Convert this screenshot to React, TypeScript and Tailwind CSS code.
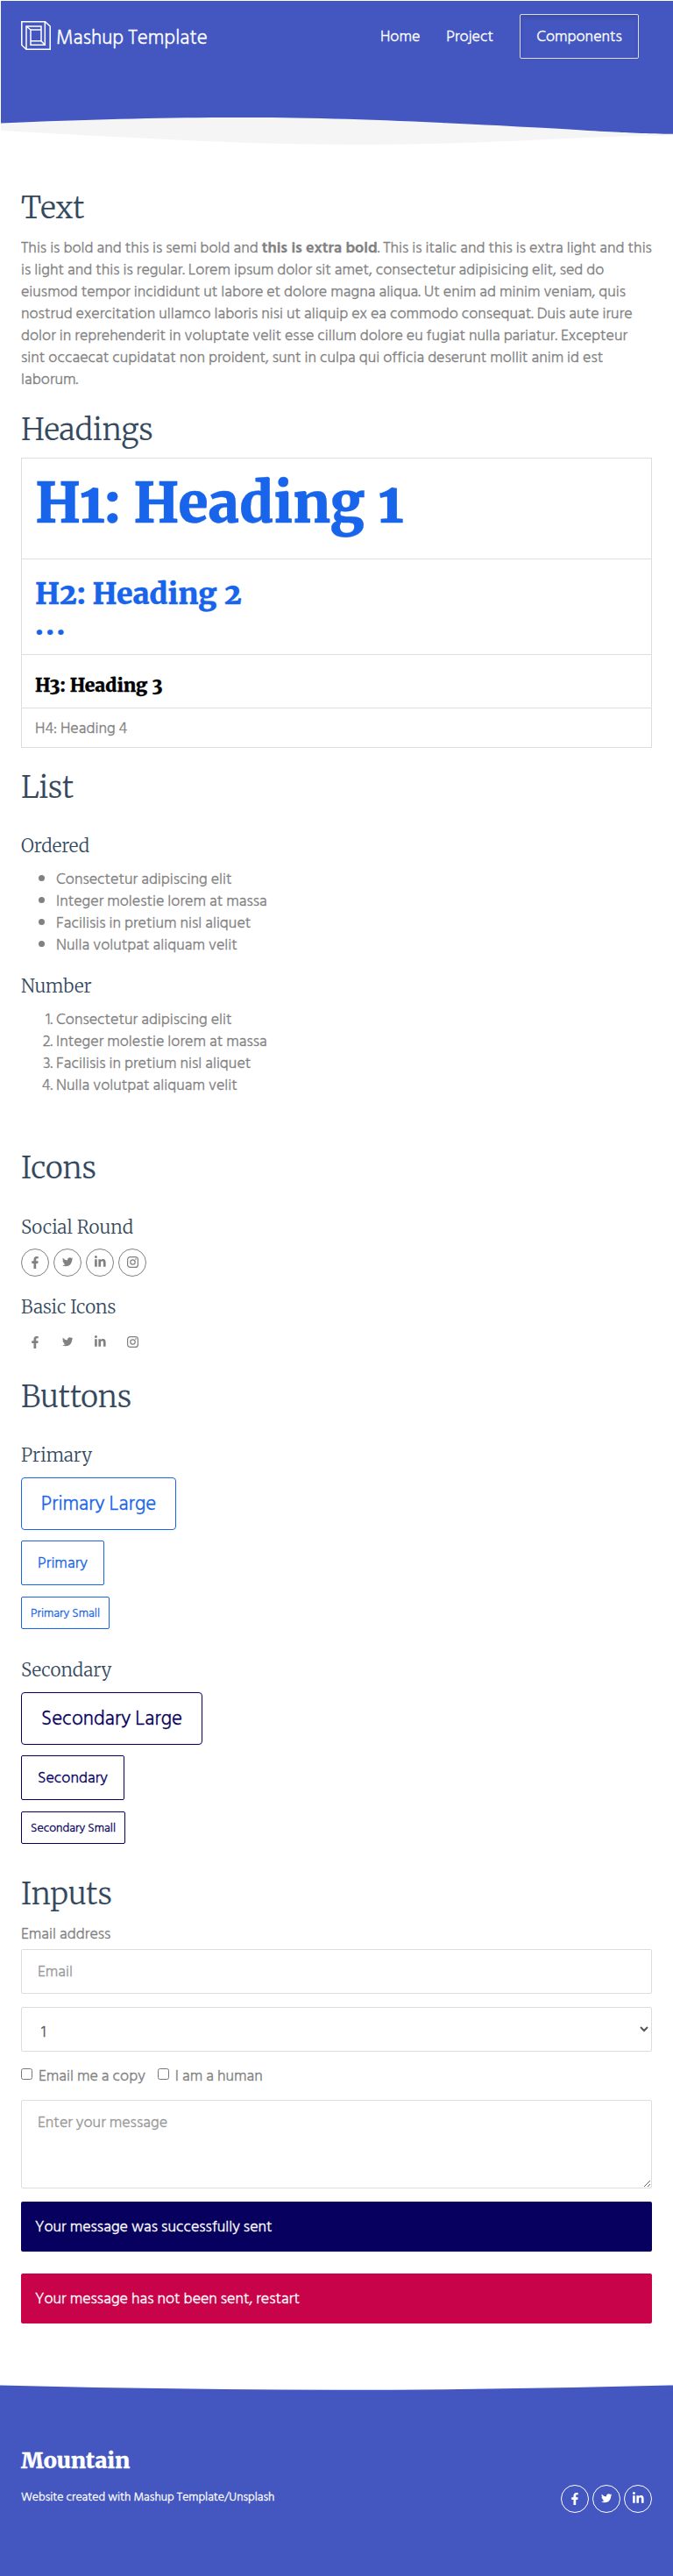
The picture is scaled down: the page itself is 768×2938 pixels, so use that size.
import type { ReactNode } from "react";
import { FaFacebookF, FaLinkedinIn, FaTwitter } from "react-icons/fa";

const items = [
  "Consectetur adipiscing elit",
  "Integer molestie lorem at massa",
  "Facilisis in pretium nisl aliquet",
  "Nulla volutpat aliquam velit",
];

function Title({ children, className }: { children: ReactNode; className: string }) {
  return (
    <h2 className={`-mb-0.5 font-['Merriweather','DejaVu_Serif_Condensed',serif] text-[34px] leading-[42px] font-light text-[#34495e] [-webkit-text-stroke:0.1px] ${className}`}>
      {children}
    </h2>
  );
}

function Subtitle({ children, className }: { children: ReactNode; className: string }) {
  return (
    <h3 className={`font-['Merriweather','DejaVu_Serif_Condensed',serif] text-[20.7px] leading-7 font-light text-[#34495e] [-webkit-text-stroke:0] ${className}`}>
      {children}
    </h3>
  );
}

function Instagram() {
  return (
    <svg viewBox="0 0 13 13" className="size-[13px]" fill="none" stroke="currentColor">
      <rect x="0.6" y="0.6" width="11.8" height="11.8" rx="3" strokeWidth="1.2" />
      <circle cx="6.5" cy="6.5" r="2.7" strokeWidth="1.2" />
      <circle cx="9.9" cy="3.1" r="0.8" fill="currentColor" stroke="none" />
    </svg>
  );
}

function Social({ round, instagram }: { round?: boolean; instagram?: boolean }) {
  const cell = round
    ? "flex size-8 items-center justify-center rounded-full border border-current pb-px"
    : "flex size-8 items-center justify-center pb-px";
  return (
    <>
      <a className={cell}><FaFacebookF className="size-[14px]" /></a>
      <a className={cell}><FaTwitter className="size-[12.5px]" /></a>
      <a className={cell}><FaLinkedinIn className="size-[14.5px]" /></a>
      {instagram && <a className={cell}><Instagram /></a>}
    </>
  );
}

function Logo() {
  return (
    <svg viewBox="0 0 34 33" className="h-[33px] w-[34px]" fill="none" stroke="#fff" strokeWidth="1.5">
      <path d="M.8.8H27.5L33.2 6V32.2H6L.8 27.5Z" />
      <path d="M27.3.8V27.2H11V10H23" />
      <path d="M6 32.2V6H23V22.8H11" />
      <path d="M6 6L11 10M23 22.8L27.3 27.2" />
    </svg>
  );
}

export default function App() {
  return (
    <div className="h-[2938px] w-[768px] overflow-hidden bg-white pt-px font-['Hind_Siliguri','Hind','Open_Sans',sans-serif] text-[18px] leading-[25px] font-light text-[#818181] [-webkit-text-stroke:0.3px]">
      <header className="ml-px">
        <div className="flex h-[132px] items-start justify-between bg-[#4457c0] pt-[15px] pr-[39px] pl-[23px] text-white">
          <div className="flex pt-2">
            <Logo />
            <span className="pl-[6px] text-[23px] leading-[38px]">Mashup Template</span>
          </div>
          <nav className="flex h-[51px] items-center leading-[51px]">
            <a className="mr-[30px] h-[51px]">Home</a>
            <a className="mr-[30px] h-[51px]">Project</a>
            <a className="h-[51px] w-[136px] rounded-[2px] border border-[#ddd] text-center leading-[49px] shadow-[inset_0_3px_5px_rgba(0,0,0,0.125)]">Components</a>
          </nav>
        </div>
        <svg viewBox="1 133 767 35" className="block h-[35px] w-[767px]">
          <path d="M0 133V149C180 159 290 165 420 165S640 156 768 154.5V133Z" fill="#f5f5f5" />
          <path d="M0 132V140.5C200 132.5 320 131.5 504 140S700 152 768 152.7V132Z" fill="#4457c0" />
        </svg>
      </header>

      <main className="mx-6">
        <Title className="pt-12">Text</Title>
        <p className="mt-[14px]">
          This is bold and this is semi bold and <b className="font-semibold">this is extra bold</b>. This is italic and this is extra light and this is light and this is regular. Lorem ipsum dolor sit amet, consectetur adipisicing elit, sed do eiusmod tempor incididunt ut labore et dolore magna aliqua. Ut enim ad minim veniam, quis nostrud exercitation ullamco laboris nisi ut aliquip ex ea commodo consequat. Duis aute irure dolor in reprehenderit in voluptate velit esse cillum dolore eu fugiat nulla pariatur. Excepteur sint occaecat cupidatat non proident, sunt in culpa qui officia deserunt mollit anim id est laborum.
        </p>

        <Title className="mt-6">Headings</Title>
        <div className="mt-[13px] divide-y divide-[#ddd] border border-[#ddd] font-['Merriweather','DejaVu_Serif_Condensed',serif] font-black oldstyle-nums">
          <h1 className="h-[115px] px-[15px] pt-[19px] text-[62.5px] leading-[63px] text-[#1864ea]">H1: Heading 1</h1>
          <h2 className="h-[109px] px-[15px] pt-[22px] text-[33.6px] leading-[35px] text-[#1864ea]">
            H2: Heading 2<br /><span className="tracking-[3.6px]">...</span>
          </h2>
          <h3 className="h-[61px] px-[15px] pt-[21px] text-[21px] leading-7 text-black">H3: Heading 3</h3>
          <h4 className="h-11 px-[15px] pt-[10px] font-['Hind_Siliguri','Hind','Open_Sans',sans-serif] font-light lining-nums">H4: Heading 4</h4>
        </div>

        <Title className="mt-6">List</Title>
        <Subtitle className="mt-[34px]">Ordered</Subtitle>
        <ul className="mt-[11px] list-disc pl-10">
          {items.map((t) => <li key={t}>{t}</li>)}
        </ul>
        <Subtitle className="mt-[21px]">Number</Subtitle>
        <ol className="mt-[11px] list-decimal pl-10">
          {items.map((t) => <li key={t}>{t}</li>)}
        </ol>

        <Title className="mt-[61px]">Icons</Title>
        <Subtitle className="mt-[35px]">Social Round</Subtitle>
        <div className="mt-[10px] flex gap-[5px]"><Social round instagram /></div>
        <Subtitle className="mt-[21px]">Basic Icons</Subtitle>
        <div className="mt-[10px] flex gap-[5px]"><Social instagram /></div>

        <Title className="mt-[25px]">Buttons</Title>
        <Subtitle className="mt-[34px]">Primary</Subtitle>
        <div className="mt-[11px] flex flex-col items-start text-[#1864ea]">
          <button className="h-[60px] w-[177px] rounded-[4px] border border-current pt-px text-[23px]">Primary Large</button>
          <button className="mt-3 h-[51px] w-[95px] rounded-[2px] border border-current">Primary</button>
          <button className="mt-[13px] h-[37px] w-[101px] rounded-[2px] border border-current text-sm">Primary Small</button>
        </div>
        <Subtitle className="mt-[33px]">Secondary</Subtitle>
        <div className="mt-[11px] flex flex-col items-start text-[#07005e]">
          <button className="h-[60px] w-[207px] rounded-[4px] border border-current pt-px text-[23px]">Secondary Large</button>
          <button className="mt-3 h-[51px] w-[118px] rounded-[2px] border border-current">Secondary</button>
          <button className="mt-[13px] h-[37px] w-[119px] rounded-[2px] border border-current text-sm">Secondary Small</button>
        </div>

        <Title className="mt-9">Inputs</Title>
        <form className="mt-[14px] flex flex-col">
          <label>Email address</label>
          <input className="mt-[5px] h-[51px] rounded-[2px] border border-[#ddd] px-[18px] placeholder:text-[#999]" placeholder="Email" />
          <select className="mt-[15px] h-[51px] rounded-[2px] border border-[#ddd] bg-white pt-[6px] pl-[18px] text-[#555]">
            <option>1</option>
          </select>
          <div className="mt-[15px] flex">
            <label className="flex"><input type="checkbox" className="mt-1 mr-[7px] size-[13px]" />Email me a copy</label>
            <label className="ml-[14px] flex"><input type="checkbox" className="mt-1 mr-[7px] size-[13px]" />I am a human</label>
          </div>
          <textarea className="mt-[15px] h-[101px] rounded-[2px] border border-[#ddd] px-[18px] py-3 placeholder:text-[#999]" placeholder="Enter your message" />
        </form>
        <div className="mt-[15px] h-[57px] rounded-[2px] bg-[#07005e] px-4 pt-4 text-white">Your message was successfully sent</div>
        <div className="mt-[25px] h-[57px] rounded-[2px] bg-[#c90349] px-4 pt-4 text-white">Your message has not been sent, restart</div>
      </main>

      <footer className="mt-[68px] text-white">
        <svg viewBox="0 2718 768 10" className="block h-[10px] w-[768px]">
          <path d="M0 2720.4Q384 2731 768 2720.4V2728H0Z" fill="#4457c0" />
        </svg>
        <div className="h-[210px] bg-[#4457c0] px-6 pt-[60px]">
          <p className="font-['Merriweather','DejaVu_Serif_Condensed',serif] text-[25px] leading-9 font-black">Mountain</p>
          <div className="mt-[10px] flex items-start justify-between">
            <p className="pt-1 text-[13.8px] leading-5">Website created with Mashup Template/Unsplash</p>
            <div className="flex gap-1"><Social round /></div>
          </div>
        </div>
      </footer>
    </div>
  );
}
